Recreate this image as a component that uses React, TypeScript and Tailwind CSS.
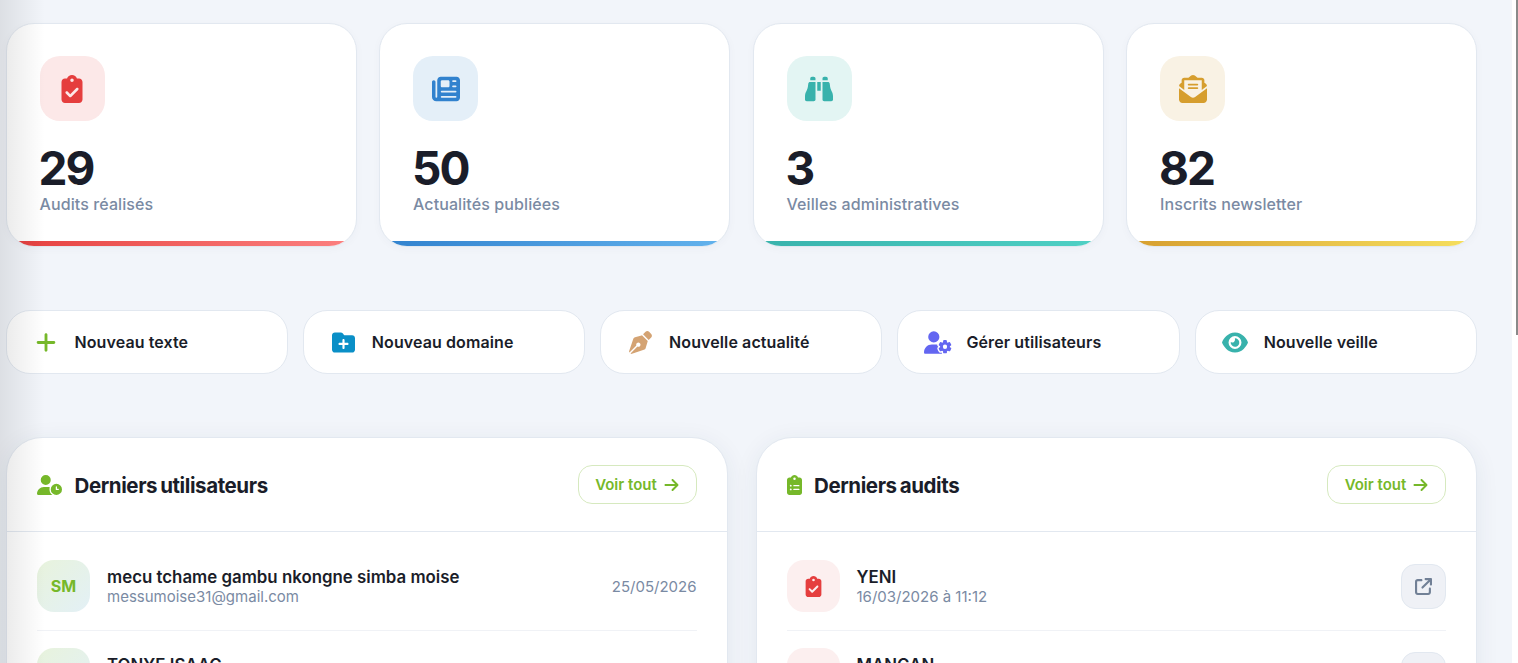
import { FaClipboardCheck, FaNewspaper, FaBinoculars, FaEnvelopeOpenText, FaPlus, FaFolderPlus, FaPenNib, FaUserGear, FaEye, FaUserClock, FaClipboardList, FaArrowRight, FaArrowUpRightFromSquare } from "react-icons/fa6";

const font = { fontFamily: "Inter, 'Liberation Sans', sans-serif" };

function Stat({ icon, value, label, box, bar }: { icon: React.ReactNode; value: string; label: string; box: string; bar: string }) {
  return (
    <div className="relative h-[224px] overflow-hidden rounded-[28px] border border-[#e2e8f0] bg-white px-[33px] pt-[32px] shadow-[0_2px_8px_rgba(30,50,90,0.03)]">
      <div className={`flex h-[65px] w-[65px] items-center justify-center rounded-[20px] text-[28px] ${box}`}>{icon}</div>
      <div className="mt-[20px] -ml-[1px] text-[46px] leading-[54px] font-bold tracking-[-2px] text-[#1a1d29]">{value}</div>
      <div className="-mt-[3px] text-[16px] leading-[24px] font-medium tracking-[0.1px] text-[#7a8aa3]">{label}</div>
      <div className={`absolute right-0 bottom-0 left-0 h-[5px] ${bar}`} />
    </div>
  );
}

function Action({ icon, label, color }: { icon: React.ReactNode; label: string; color: string }) {
  return (
    <div className="flex h-[64px] items-center rounded-[24px] border border-[#e2e8f0] bg-white pl-[25px]">
      <div className={`flex w-[29px] justify-center ${color}`}>{icon}</div>
      <span className="ml-[14px] text-[16px] font-semibold tracking-[0.1px] text-[#1a1d29]">{label}</span>
    </div>
  );
}

function VoirTout() {
  return (
    <div className="flex h-[39px] w-[119px] items-center justify-center gap-[7px] rounded-[14px] border border-[#d6e9bf] bg-white text-[15px] font-semibold text-[#76b82a]">
      <span className="pt-[1px]">Voir tout</span> <FaArrowRight className="h-[16px] w-[15px]" />
    </div>
  );
}

function Panel({ icon, title, children }: { icon: React.ReactNode; title: string; children: React.ReactNode }) {
  return (
    <div className="overflow-hidden rounded-t-[36px] border border-[#e2e8f0] bg-white shadow-[0_4px_24px_rgba(30,50,90,0.07)]">
      <div className="flex h-[94px] items-center justify-between border-b border-[#e2e8f0] px-[30px]">
        <div className="flex items-center gap-[12.5px] text-[#76b82a]">
          {icon}
          <h2 className="pt-[4px] text-[20.5px] font-bold tracking-[-0.4px] text-[#1a1d29] [word-spacing:-1.5px]">{title}</h2>
        </div>
        <VoirTout />
      </div>
      <div className="px-[30px] pt-[28px]">{children}</div>
    </div>
  );
}

function Row({ lead, title, sub, right, last }: { lead: React.ReactNode; title: string; sub?: string; right?: React.ReactNode; last?: boolean }) {
  return (
    <div className={`flex items-start ${last ? "h-[70px]" : "mb-[17px] h-[71px] border-b border-[#f0f2f6]"}`}>
      {lead}
      <div className="ml-[17px] flex-1 pt-[6px]">
        <div className="text-[16.85px] leading-[22px] font-semibold text-[#1a1d29]">{title}</div>
        {sub && <div className="text-[15px] leading-[18px] text-[#7a8aa3]">{sub}</div>}
      </div>
      {right}
    </div>
  );
}

const Avatar = ({ text }: { text?: string }) => (
  <div className="flex h-[52px] w-[53px] items-center justify-center rounded-[17px] bg-gradient-to-br from-[#e8f3dc] to-[#e3f0f6] text-[16px] font-bold text-[#76b82a]">{text}</div>
);
const AuditIcon = () => (
  <div className="flex h-[52px] w-[53px] items-center justify-center rounded-[17px] bg-[#fcefef] text-[21px] text-[#e53e3e]"><FaClipboardCheck /></div>
);
const OpenBtn = () => (
  <div className="mt-[4px] flex h-[45px] w-[45px] items-center justify-center rounded-[14px] border border-[#e2e8f0] bg-[#eff1f6] text-[17px] text-[#718096]"><FaArrowUpRightFromSquare /></div>
);

export default function App() {
  return (
    <div style={font} className="relative flex h-[663px] overflow-hidden bg-white">
      <main className="h-full flex-1 overflow-hidden bg-[#f2f5fa] pt-[23px] pr-[35px] pl-[5.5px]">
        <section className="grid grid-cols-4 gap-[22.5px]">
          <Stat icon={<FaClipboardCheck />} value="29" label="Audits réalisés" box="bg-[#fce8e8] text-[#e53e3e]" bar="bg-gradient-to-r from-[#e53e3e] to-[#fc8181]" />
          <Stat icon={<FaNewspaper />} value="50" label="Actualités publiées" box="bg-[#e4eff8] text-[#3182ce]" bar="bg-gradient-to-r from-[#3182ce] to-[#63b3ed]" />
          <Stat icon={<FaBinoculars />} value="3" label="Veilles administratives" box="bg-[#e3f5f3] text-[#38b2ac]" bar="bg-gradient-to-r from-[#38b2ac] to-[#4fd1c5]" />
          <Stat icon={<FaEnvelopeOpenText />} value="82" label="Inscrits newsletter" box="bg-[#f9f2e4] text-[#d69e2e]" bar="bg-gradient-to-r from-[#d69e2e] to-[#f6e05e]" />
        </section>
        <section className="mt-[63px] grid grid-cols-5 gap-[15px]">
          <Action icon={<FaPlus className="h-[23px] w-[20px]" />} label="Nouveau texte" color="text-[#76b82a]" />
          <Action icon={<FaFolderPlus className="h-[23px] w-[23px]" />} label="Nouveau domaine" color="text-[#0a8fc7]" />
          <Action icon={<FaPenNib className="h-[23px] w-[23px]" />} label="Nouvelle actualité" color="text-[#d4a373]" />
          <Action icon={<FaUserGear className="h-[23px] w-[28px]" />} label="Gérer utilisateurs" color="text-[#6366f1]" />
          <Action icon={<FaEye className="h-[23px] w-[26px]" />} label="Nouvelle veille" color="text-[#38b2ac]" />
        </section>
        <section className="mt-[63px] grid grid-cols-2 gap-[28px] pl-[0.5px]">
          <Panel icon={<FaUserClock className="h-[20px] w-[25px]" />} title="Derniers utilisateurs">
            <Row lead={<Avatar text="SM" />} title="mecu tchame gambu nkongne simba moise" sub="messumoise31@gmail.com" right={<div className="pt-[17px] text-[15px] leading-[20px] text-[#7a8aa3]">25/05/2026</div>} />
            <Row lead={<Avatar />} title="TONYE ISAAC" last />
          </Panel>
          <Panel icon={<FaClipboardList className="h-[20px] w-[15px]" />} title="Derniers audits">
            <Row lead={<AuditIcon />} title="YENI" sub="16/03/2026 à 11:12" right={<OpenBtn />} />
            <Row lead={<AuditIcon />} title="MANGAN" right={<OpenBtn />} last />
          </Panel>
        </section>
      </main>
      <div className="relative h-full w-[6px] bg-white">
        <div className="absolute top-0 right-0 h-[335px] w-[2px] bg-[#8a8a8a]" />
      </div>
      <div className="pointer-events-none absolute top-0 bottom-0 left-0 w-[45px] bg-gradient-to-r from-black/[0.09] to-transparent" />
    </div>
  );
}
